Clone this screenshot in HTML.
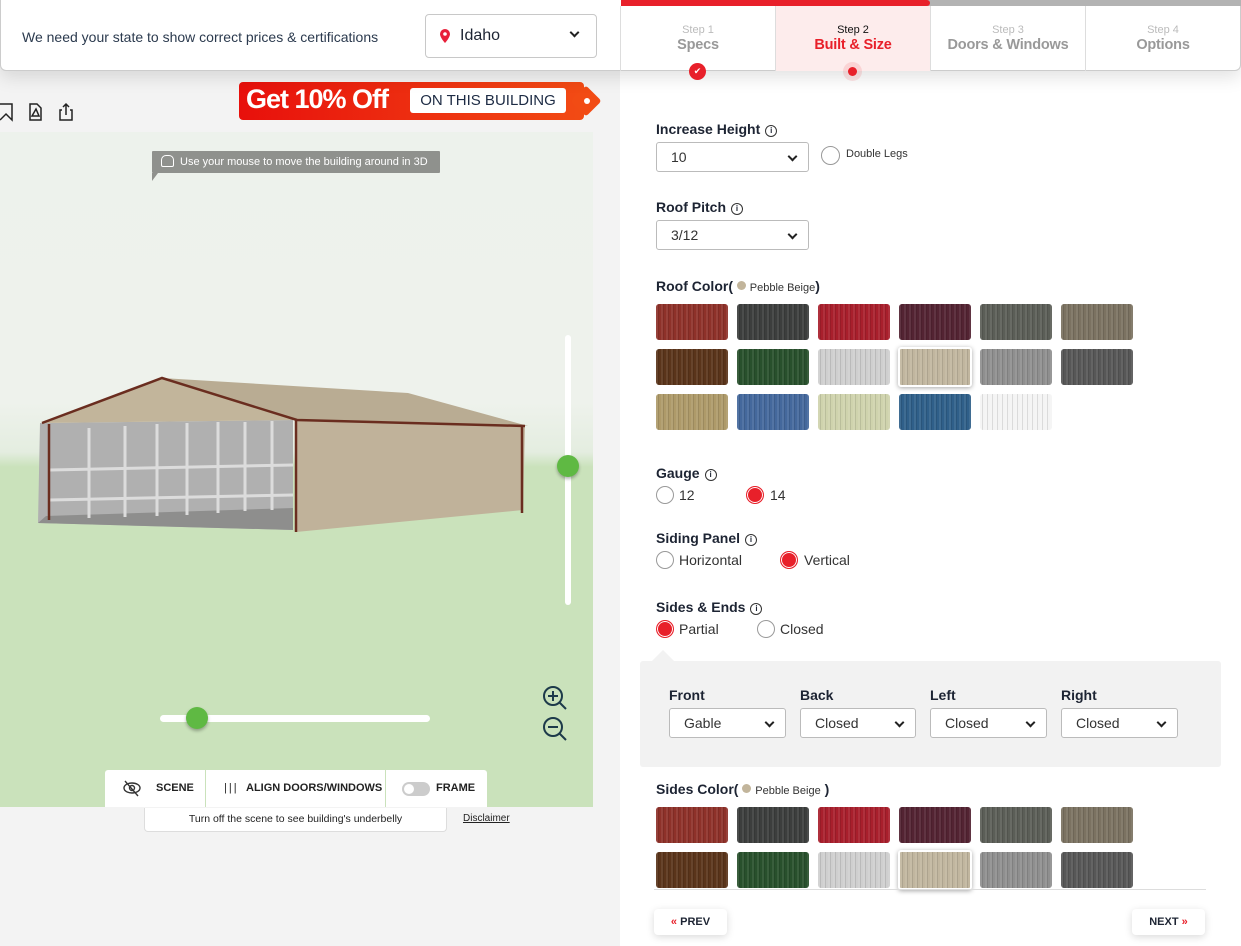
<!DOCTYPE html>
<html><head><meta charset="utf-8"><style>
*{box-sizing:border-box;margin:0;padding:0}
body{width:1241px;height:946px;overflow:hidden;background:#f3f3f3;font-family:"Liberation Sans",sans-serif;color:#1d2433;position:relative}
.a{position:absolute}
.right{left:620px;top:0;width:621px;height:946px;background:#fff}
.hdr{left:0;top:0;width:1241px;height:71px;background:#fff;border:1px solid #ccc;border-top:none;border-radius:0 0 6px 6px;box-shadow:0 6px 18px rgba(0,0,0,.12)}
.step{top:6px;width:155px;height:65px;text-align:center;border-left:1px solid #ddd}
.step .s{font-size:11px;color:#bbb;margin-top:18px}
.step .t{font-size:14.5px;color:#999;margin-top:1px;font-weight:bold;letter-spacing:-0.2px}
.lbl{font-size:14px;font-weight:bold;color:#1d2433}
.info{display:inline-block;width:12px;height:12px;border:1.3px solid #333;border-radius:50%;font-size:8px;text-align:center;line-height:10px;font-weight:bold;vertical-align:1px;margin-left:5px}
.sel{height:30px;border:1px solid #bbb;border-radius:3px;background:#fff;font-size:14px;padding-left:14px;line-height:28px;color:#333}
.sel:after{content:"";position:absolute;right:12px;top:10px;width:5px;height:5px;border-right:2px solid #222;border-bottom:2px solid #222;transform:rotate(45deg)}
.rad{width:18px;height:18px;border-radius:50%;border:1px solid #999;background:#fff}
.rad.on{background:#e8202a;border:1px solid #e8202a;box-shadow:0 0 0 1px #fff inset}
.rt{font-size:14px;color:#333}
.sw{width:72px;height:36px;border-radius:3px;background-image:repeating-linear-gradient(90deg,rgba(255,255,255,.08) 0 2px,rgba(0,0,0,.1) 2px 3px,rgba(255,255,255,0) 3px 5px)}
.tb{background:#fff;top:770px;height:37px;font-size:11px;font-weight:bold;color:#222;line-height:37px}
</style></head><body>
<div class="a right"></div>

<!-- viewer -->
<div class="a" style="left:0;top:132px;width:593px;height:675px;background:linear-gradient(#edf2ec 0,#eef2ec 270px,#e4ede0 320px,#cae2bb 335px,#cae2bb 100%)"></div>
<div class="a" style="left:152px;top:151px;width:288px;height:22px;background:#8f918d;color:#fff;font-size:11px;line-height:22px;padding-left:28px;border-radius:1px">Use your mouse to move the building around in 3D</div>
<div class="a" style="left:161px;top:155px;width:13px;height:12px;border:1.3px solid #fff;border-radius:5px 5px 2px 2px"></div>
<div class="a" style="left:152px;top:173px;width:0;height:0;border-left:6px solid #8f918d;border-bottom:8px solid transparent"></div>

<svg class="a" style="left:0;top:360px" width="600" height="180" viewBox="0 0 600 180">
<polygon points="38,163 293,170 293,60 40,63" fill="#b0b0b0"/>
<polygon points="46,156 293,148 293,170 38,163" fill="#8e8e8d"/>
<g stroke="#dcdcdc" stroke-width="3"><line x1="89" y1="68" x2="89" y2="158"/><line x1="125" y1="66" x2="125" y2="157"/><line x1="157" y1="64" x2="157" y2="156"/><line x1="187" y1="63" x2="187" y2="155"/><line x1="218" y1="62" x2="218" y2="153"/><line x1="245" y1="62" x2="245" y2="151"/><line x1="272" y1="61" x2="272" y2="150"/><line x1="50" y1="110" x2="293" y2="105"/><line x1="50" y1="140" x2="293" y2="135"/></g>
<polygon points="42,63 162,18 297,60" fill="#c2b59b"/>
<polygon points="162,18 408,33 528,66 297,60" fill="#b9ac93"/>
<polygon points="297,60 525,66 523,150 296,172" fill="#c0b29a"/>
<g stroke="#6a2d1f" stroke-width="2.5" fill="none"><polyline points="42,63 162,18 297,60 525,66"/><line x1="296" y1="60" x2="296" y2="172"/><line x1="49" y1="64" x2="49" y2="160"/><line x1="522" y1="66" x2="522" y2="153"/></g>
</svg>

<!-- vertical slider -->
<div class="a" style="left:565px;top:335px;width:6px;height:270px;background:#fff;border-radius:3px"></div>
<div class="a" style="left:557px;top:455px;width:22px;height:22px;border-radius:50%;background:#5fb943;box-shadow:0 2px 3px rgba(0,0,0,.3)"></div>
<div class="a" style="left:160px;top:715px;width:270px;height:7px;background:#fff;border-radius:4px"></div>
<div class="a" style="left:186px;top:707px;width:22px;height:22px;border-radius:50%;background:#5fb943;box-shadow:0 2px 3px rgba(0,0,0,.3)"></div>
<svg class="a" style="left:540px;top:684px" width="30" height="60" viewBox="0 0 30 60"><g stroke="#1d3a4a" stroke-width="2" fill="none"><circle cx="13" cy="12" r="9"/><line x1="19.5" y1="18.5" x2="26" y2="25"/><line x1="8" y1="12" x2="18" y2="12"/><line x1="13" y1="7" x2="13" y2="17"/><circle cx="13" cy="43" r="9"/><line x1="19.5" y1="49.5" x2="26" y2="56"/><line x1="8" y1="43" x2="18" y2="43"/></g></svg>

<!-- toolbar -->
<div class="a tb" style="left:105px;width:100px;border-radius:3px 0 0 0"><span style="position:absolute;left:51px">SCENE</span></div>
<svg class="a" style="left:122px;top:779px" width="20" height="18"><g stroke="#333" stroke-width="1.4" fill="none"><ellipse cx="10" cy="9" rx="8" ry="5"/><circle cx="10" cy="9" r="2.5"/><line x1="3" y1="2" x2="16" y2="17"/></g></svg>
<div class="a tb" style="left:206px;width:179px"><span style="position:absolute;left:18px;letter-spacing:2px;font-weight:normal">|||</span><span style="position:absolute;left:40px">ALIGN DOORS/WINDOWS</span></div>
<div class="a tb" style="left:386px;width:101px;border-radius:0 3px 0 0"><span style="position:absolute;left:16px;top:12px;width:28px;height:14px;border-radius:7px;background:#ccc"></span><span style="position:absolute;left:18px;top:14px;width:10px;height:10px;border-radius:50%;background:#fff"></span><span style="position:absolute;left:50px">FRAME</span></div>
<div class="a" style="left:144px;top:808px;width:303px;height:24px;background:#fff;border:1px solid #ddd;border-top:none;border-radius:0 0 4px 4px;font-size:10.5px;text-align:center;line-height:22px;color:#222">Turn off the scene to see building's underbelly</div>
<div class="a" style="left:463px;top:813px;font-size:10px;text-decoration:underline;color:#222">Disclaimer</div>

<!-- icons -->
<svg class="a" style="left:0;top:102px" width="80" height="20"><g stroke="#222" stroke-width="1.5" fill="none"><polyline points="0,2 12,2 12,18 6,12 0,18"/><path d="M30 2h7l4 4v12h-11z"/><path d="M32 14l4-7 3 7z"/><path d="M62 8h-2v10h12v-10h-2M66 13v-11M63 5l3-3 3 3"/></g></svg>

<!-- promo -->
<div class="a" style="left:239px;top:82px;width:345px;height:38px;background:linear-gradient(90deg,#e8100c,#f24b14);border-radius:4px"></div>
<div class="a" style="left:575px;top:90px;width:22px;height:22px;background:#f24b14;transform:rotate(45deg);border-radius:3px"></div>
<div class="a" style="left:584px;top:98px;width:6px;height:6px;border-radius:50%;background:#fff"></div>
<div class="a" style="left:246px;top:84px;font-size:27px;font-weight:bold;color:#fff;letter-spacing:-1px">Get 10% Off</div>
<div class="a" style="left:410px;top:88px;width:156px;height:25px;background:#fff;border-radius:3px;font-size:15px;color:#1d2b44;text-align:center;line-height:25px">ON THIS BUILDING</div>

<!-- header -->
<div class="a hdr"></div>
<div class="a" style="left:22px;top:29px;font-size:14px;color:#2b3a4e">We need your state to show correct prices &amp; certifications</div>
<div class="a" style="left:425px;top:14px;width:172px;height:44px;border:1px solid #c8c8c8;border-radius:4px;background:#fff"></div>
<svg class="a" style="left:439px;top:28px" width="12" height="16"><path d="M6 1a5 5 0 0 1 5 5c0 3.5-5 9-5 9s-5-5.5-5-9a5 5 0 0 1 5-5z" fill="#e8203a"/><circle cx="6" cy="6" r="1.8" fill="#fff"/></svg>
<div class="a" style="left:460px;top:27px;font-size:16px;color:#1d2433">Idaho</div>
<div class="a" style="left:571px;top:29px;width:7px;height:7px;border-right:2px solid #222;border-bottom:2px solid #222;transform:rotate(45deg)"></div>

<div class="a" style="left:621px;top:0;width:620px;height:6px;background:#b3b3b3"></div>
<div class="a" style="left:621px;top:0;width:309px;height:6px;background:#e8202a;border-radius:0 3px 3px 0"></div>
<div class="a step" style="left:620px"><div class="s">Step 1</div><div class="t">Specs</div></div>
<div class="a step" style="left:775px;background:#fdecec"><div class="s" style="color:#111">Step 2</div><div class="t" style="color:#e8202a">Built &amp; Size</div></div>
<div class="a step" style="left:930px"><div class="s">Step 3</div><div class="t">Doors &amp; Windows</div></div>
<div class="a step" style="left:1085px"><div class="s">Step 4</div><div class="t">Options</div></div>
<div class="a" style="left:689px;top:63px;width:17px;height:17px;border-radius:50%;background:#e8202a;color:#fff;font-size:9px;text-align:center;line-height:17px">✔</div>
<div class="a" style="left:843px;top:62px;width:19px;height:19px;border-radius:50%;background:rgba(232,32,42,.12)"></div>
<div class="a" style="left:848px;top:67px;width:9px;height:9px;border-radius:50%;background:#e8202a"></div>

<!-- form -->
<div class="a lbl" style="left:656px;top:121px">Increase Height<span class="info">i</span></div>
<div class="a sel" style="left:656px;top:142px;width:153px">10</div>
<div class="a rad" style="left:821px;top:146px;width:19px;height:19px"></div>
<div class="a" style="left:846px;top:148px;font-size:11px;color:#333">Double Legs</div>

<div class="a lbl" style="left:656px;top:199px">Roof Pitch<span class="info">i</span></div>
<div class="a sel" style="left:656px;top:220px;width:153px">3/12</div>

<div class="a lbl" style="left:656px;top:278px">Roof Color( <span style="display:inline-block;width:9px;height:9px;border-radius:50%;background:#c2b59b;vertical-align:1px"></span> <span style="font-size:11px;font-weight:normal;color:#333">Pebble Beige</span>)</div>

<div class="a sw" style="left:656px;top:304px;background-color:#8e3129"></div>
<div class="a sw" style="left:737px;top:304px;background-color:#3c3e3d"></div>
<div class="a sw" style="left:818px;top:304px;background-color:#a81f2c"></div>
<div class="a sw" style="left:899px;top:304px;background-color:#532332"></div>
<div class="a sw" style="left:980px;top:304px;background-color:#5b5e57"></div>
<div class="a sw" style="left:1061px;top:304px;background-color:#7b7261"></div>
<div class="a sw" style="left:656px;top:349px;background-color:#5a341a"></div>
<div class="a sw" style="left:737px;top:349px;background-color:#28502c"></div>
<div class="a sw" style="left:818px;top:349px;background-color:#cfcfcf"></div>
<div class="a sw" style="left:898px;top:347px;width:74px;height:40px;background-color:#c1b69f;border:2px solid #fff;box-shadow:0 1px 5px rgba(0,0,0,.35)"></div>
<div class="a sw" style="left:980px;top:349px;background-color:#8f8f8f"></div>
<div class="a sw" style="left:1061px;top:349px;background-color:#575757"></div>
<div class="a sw" style="left:656px;top:394px;background-color:#ae9a69"></div>
<div class="a sw" style="left:737px;top:394px;background-color:#44689c"></div>
<div class="a sw" style="left:818px;top:394px;background-color:#cfd3ad"></div>
<div class="a sw" style="left:899px;top:394px;background-color:#2f5f89"></div>
<div class="a sw" style="left:980px;top:394px;background-color:#f4f4f4"></div>

<div class="a lbl" style="left:656px;top:465px">Gauge<span class="info">i</span></div>
<div class="a rad" style="left:656px;top:486px"></div><div class="a rt" style="left:679px;top:487px">12</div>
<div class="a rad on" style="left:746px;top:486px"></div><div class="a rt" style="left:770px;top:487px">14</div>

<div class="a lbl" style="left:656px;top:530px">Siding Panel<span class="info">i</span></div>
<div class="a rad" style="left:656px;top:551px"></div><div class="a rt" style="left:679px;top:552px">Horizontal</div>
<div class="a rad on" style="left:780px;top:551px"></div><div class="a rt" style="left:804px;top:552px">Vertical</div>

<div class="a lbl" style="left:656px;top:599px">Sides &amp; Ends<span class="info">i</span></div>
<div class="a rad on" style="left:656px;top:620px"></div><div class="a rt" style="left:679px;top:621px">Partial</div>
<div class="a rad" style="left:757px;top:620px"></div><div class="a rt" style="left:780px;top:621px">Closed</div>

<div class="a" style="left:640px;top:661px;width:581px;height:106px;background:#f2f2f2;border-radius:3px"></div>
<div class="a" style="left:652px;top:650px;width:0;height:0;border-left:11px solid transparent;border-right:11px solid transparent;border-bottom:11px solid #f2f2f2"></div>
<div class="a lbl" style="left:669px;top:687px">Front</div>
<div class="a lbl" style="left:800px;top:687px">Back</div>
<div class="a lbl" style="left:930px;top:687px">Left</div>
<div class="a lbl" style="left:1061px;top:687px">Right</div>
<div class="a sel" style="left:669px;top:708px;width:117px">Gable</div>
<div class="a sel" style="left:800px;top:708px;width:116px">Closed</div>
<div class="a sel" style="left:930px;top:708px;width:117px">Closed</div>
<div class="a sel" style="left:1061px;top:708px;width:117px">Closed</div>

<div class="a lbl" style="left:656px;top:781px">Sides Color( <span style="display:inline-block;width:9px;height:9px;border-radius:50%;background:#c2b59b;vertical-align:1px"></span> <span style="font-size:11px;font-weight:normal;color:#333">Pebble Beige</span> )</div>
<div class="a sw" style="left:656px;top:807px;background-color:#8e3129"></div>
<div class="a sw" style="left:737px;top:807px;background-color:#3c3e3d"></div>
<div class="a sw" style="left:818px;top:807px;background-color:#a81f2c"></div>
<div class="a sw" style="left:899px;top:807px;background-color:#532332"></div>
<div class="a sw" style="left:980px;top:807px;background-color:#5b5e57"></div>
<div class="a sw" style="left:1061px;top:807px;background-color:#7b7261"></div>
<div class="a sw" style="left:656px;top:852px;background-color:#5a341a"></div>
<div class="a sw" style="left:737px;top:852px;background-color:#28502c"></div>
<div class="a sw" style="left:818px;top:852px;background-color:#cfcfcf"></div>
<div class="a sw" style="left:898px;top:850px;width:74px;height:40px;background-color:#c1b69f;border:2px solid #fff;box-shadow:0 1px 5px rgba(0,0,0,.35)"></div>
<div class="a sw" style="left:980px;top:852px;background-color:#8f8f8f"></div>
<div class="a sw" style="left:1061px;top:852px;background-color:#575757"></div>
<div class="a" style="left:654px;top:889px;width:552px;height:1px;background:#ddd"></div>

<div class="a" style="left:654px;top:909px;width:73px;height:26px;background:#fff;border-radius:4px;box-shadow:0 2px 8px rgba(0,0,0,.15);font-size:11px;font-weight:bold;line-height:26px;text-align:center"><span style="color:#e8202a">«</span> PREV</div>
<div class="a" style="left:1132px;top:909px;width:73px;height:26px;background:#fff;border-radius:4px;box-shadow:0 2px 8px rgba(0,0,0,.15);font-size:11px;font-weight:bold;line-height:26px;text-align:center">NEXT <span style="color:#e8202a">»</span></div>
</body></html>
